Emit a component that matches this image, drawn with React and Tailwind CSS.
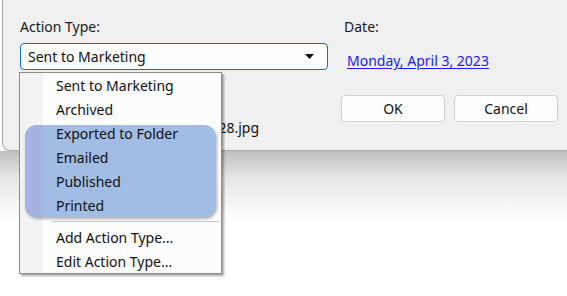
import React from 'react';

const menuTop = ['Sent to Marketing', 'Archived', 'Exported to Folder', 'Emailed', 'Published', 'Printed'];
const menuBottom = ['Add Action Type...', 'Edit Action Type...'];

const MenuItem = ({ label }) => (
    <div className="relative h-[24px] flex items-center pl-[36px] text-[14px] text-[#111]">{label}</div>
);

const ActionMenu = () => (
    <div className="absolute left-[19px] top-[72px] w-[203px] h-[202px] bg-[#fcfcfc] border border-[#8c8c8c] shadow-[2px_2px_2px_rgba(0,0,0,0.35)]">
        <div className="absolute left-0 top-0 bottom-0 w-[23px] bg-[#f3f3f3]" />
        <div className="absolute left-[5px] top-[52px] w-[191px] h-[92px] rounded-[12px] bg-[#a1bde4] shadow-[1px_2px_3px_rgba(0,0,0,0.3)] overflow-hidden">
            <div className="w-[18px] h-full bg-[#a5b3e2]" />
        </div>
        <div className="relative">
            {menuTop.map((m) => <MenuItem key={m} label={m} />)}
            <div className="h-[8px] flex items-center pl-[32px] pr-[1px]">
                <div className="h-px w-full bg-[#c8c8c8]" />
            </div>
            {menuBottom.map((m) => <MenuItem key={m} label={m} />)}
        </div>
    </div>
);

export default function App() {
    return (
        <div className="relative w-[567px] h-[296px] bg-white overflow-hidden" style={{ fontFamily: '"Noto Sans", "Open Sans", sans-serif' }}>
            <div className="pl-[2px]">
                <div className="h-[151px] bg-[#f0f0f0] border-l border-b border-[#a8a8a8] rounded-bl-[8px] grid grid-cols-[324px_1fr] pl-[17px] pt-[17px]">
                    <div className="flex flex-col">
                        <div className="text-[14px] text-[#1a1a1a] h-[20px] leading-[20px]">Action Type:</div>
                        <div className="mt-[6px] h-[27px] w-[308px] bg-[#fdfdfd] border border-[#0a6fd0] rounded-[4px] flex items-center justify-between pl-[7px] pr-[13px] text-[14px] text-[#111]">
                            <span>Sent to Marketing</span>
                            <svg width="9" height="5" viewBox="0 0 9 5"><path d="M0 0h9L4.5 5z" fill="#111" /></svg>
                        </div>
                        <div className="mt-[47px] w-[239px] text-right text-[14px] text-[#111]">IMG_0428.jpg</div>
                    </div>
                    <div className="flex flex-col">
                        <div className="text-[14px] text-[#1a1a1a] h-[20px] leading-[20px]">Date:</div>
                        <a href="#" className="mt-[13px] ml-[3px] text-[14px] text-[#1a1aff] underline underline-offset-2">Monday, April 3, 2023</a>
                        <div className="mt-[24px] -ml-[3px] flex gap-[9px]">
                            <button className="w-[104px] h-[27px] bg-[#fdfdfd] border border-[#d0d0d0] rounded-[4px] text-[14px] text-[#111]">OK</button>
                            <button className="w-[104px] h-[27px] bg-[#fdfdfd] border border-[#d0d0d0] rounded-[4px] text-[14px] text-[#111]">Cancel</button>
                        </div>
                    </div>
                </div>
            </div>
            <div className="h-[70px] bg-gradient-to-b from-[#c0c0c0] via-[#e8e8e8] via-40% to-white" />
            <ActionMenu />
        </div>
    );
}
